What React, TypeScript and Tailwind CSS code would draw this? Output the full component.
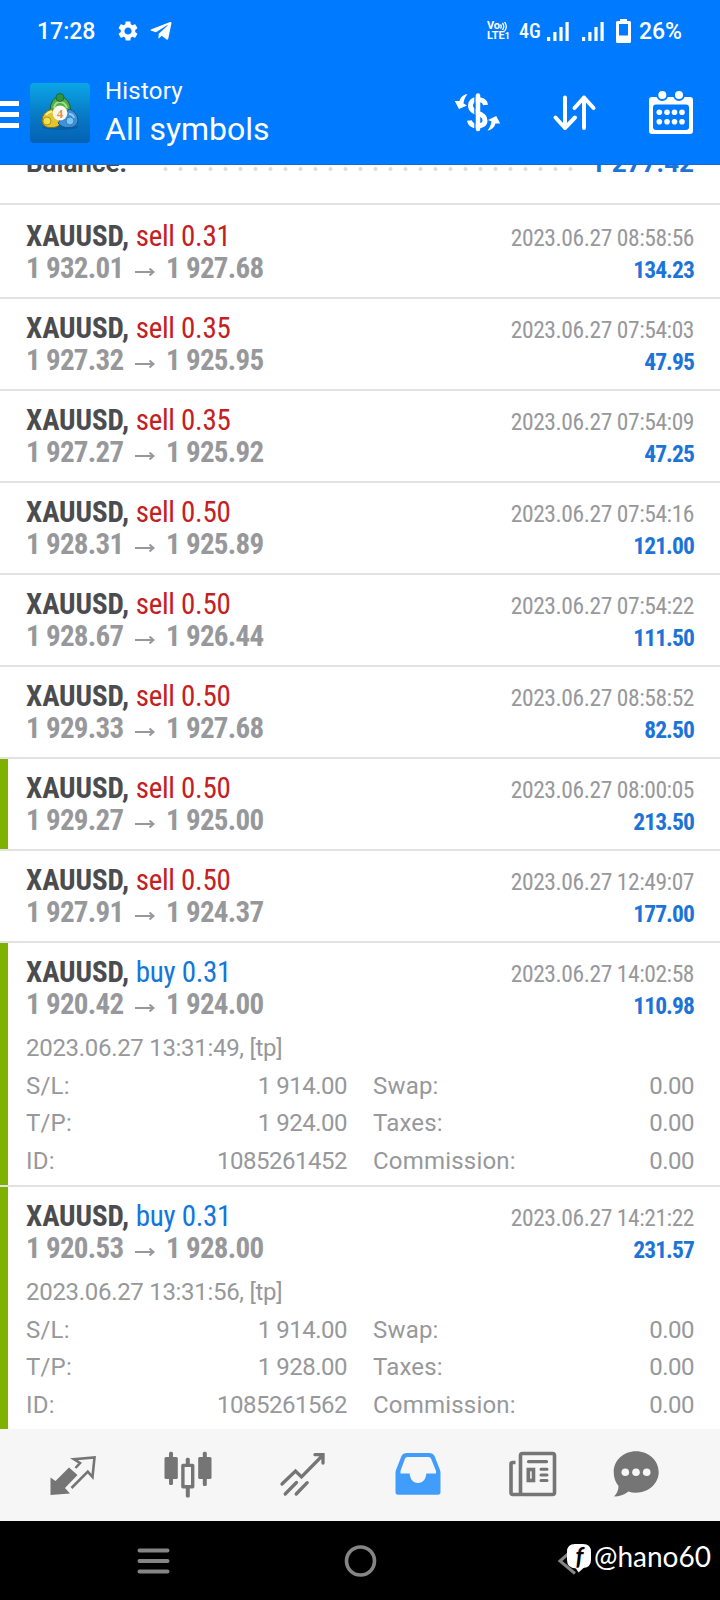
import { MdSettings } from "react-icons/md";
import { FaTelegramPlane } from "react-icons/fa";

interface Details {
  opened: string;
  sl: string;
  tp: string;
  id: string;
}

interface Deal {
  side: "buy" | "sell";
  lots: string;
  open: string;
  close: string;
  time: string;
  profit: string;
  tp?: boolean;
  details?: Details;
}

const deals: Deal[] = [
  { side: "sell", lots: "0.31", open: "1 932.01", close: "1 927.68", time: "2023.06.27 08:58:56", profit: "134.23" },
  { side: "sell", lots: "0.35", open: "1 927.32", close: "1 925.95", time: "2023.06.27 07:54:03", profit: "47.95" },
  { side: "sell", lots: "0.35", open: "1 927.27", close: "1 925.92", time: "2023.06.27 07:54:09", profit: "47.25" },
  { side: "sell", lots: "0.50", open: "1 928.31", close: "1 925.89", time: "2023.06.27 07:54:16", profit: "121.00" },
  { side: "sell", lots: "0.50", open: "1 928.67", close: "1 926.44", time: "2023.06.27 07:54:22", profit: "111.50" },
  { side: "sell", lots: "0.50", open: "1 929.33", close: "1 927.68", time: "2023.06.27 08:58:52", profit: "82.50" },
  { side: "sell", lots: "0.50", open: "1 929.27", close: "1 925.00", time: "2023.06.27 08:00:05", profit: "213.50", tp: true },
  { side: "sell", lots: "0.50", open: "1 927.91", close: "1 924.37", time: "2023.06.27 12:49:07", profit: "177.00" },
  {
    side: "buy", lots: "0.31", open: "1 920.42", close: "1 924.00", time: "2023.06.27 14:02:58", profit: "110.98", tp: true,
    details: { opened: "2023.06.27 13:31:49, [tp]", sl: "1 914.00", tp: "1 924.00", id: "1085261452" },
  },
  {
    side: "buy", lots: "0.31", open: "1 920.53", close: "1 928.00", time: "2023.06.27 14:21:22", profit: "231.57", tp: true,
    details: { opened: "2023.06.27 13:31:56, [tp]", sl: "1 914.00", tp: "1 928.00", id: "1085261562" },
  },
];

function SignalBars() {
  return (
    <svg width="22" height="20" viewBox="0 0 22 20" fill="#fff">
      <rect x="0" y="16" width="3.2" height="4" />
      <rect x="6.3" y="11" width="3.2" height="9" />
      <rect x="12.4" y="6" width="3.2" height="14" />
      <rect x="18.5" y="1" width="3.2" height="19" />
    </svg>
  );
}

function StatusBar() {
  return (
    <div className="flex h-[62px] items-center pr-[38px] pl-[37px] text-white">
      <span className="w-[79px] pt-[2px] text-[23px] leading-[60px] font-medium">17:28</span>
      <MdSettings size={24} />
      <FaTelegramPlane size={24} className="ml-[9px]" />
      <div className="ml-auto flex w-[25px] flex-col font-bold">
        <span className="flex items-center text-[11px] leading-[10px]">
          Vo
          <svg width="7" height="9" viewBox="0 0 7 9" fill="none" stroke="#fff" strokeWidth="1.3">
            <path d="M0.5 2.5Q2 4.5 .5 6.5M2.5 1Q5 4.5 2.5 8M4.6 0Q8 4.5 4.6 9" />
          </svg>
        </span>
        <span className="flex items-baseline text-[11px] leading-[10px]">
          LTE<span className="text-[9px]">1</span>
        </span>
      </div>
      <span className="ml-[7px] w-[28px] text-[20px] leading-[60px] font-medium font-stretch-condensed">4G</span>
      <SignalBars />
      <div className="w-[13px]" />
      <SignalBars />
      <svg className="ml-[12px]" width="15" height="24" viewBox="0 0 15 24">
        <path fill="#fff" fillRule="evenodd" d="M4 0H11V2H13.5Q15 2 15 3.500V22.500Q15 24 13.500 24H1.500Q0 24 0 22.500V3.500Q0 2 1.500 2H4ZM3 5V16.500H12V5Z" />
      </svg>
      <span className="ml-[8px] pt-[2px] text-[23px] leading-[60px] font-medium">26%</span>
    </div>
  );
}

function AppLogo() {
  return (
    <svg width="60" height="60" viewBox="0 0 60 60">
      <defs>
        <linearGradient id="logoBg" x1="0" y1="0" x2="0" y2="1">
          <stop offset="0" stopColor="#0aa6e6" />
          <stop offset="0.55" stopColor="#0879c4" />
          <stop offset="1" stopColor="#0561b4" />
        </linearGradient>
      </defs>
      <rect width="60" height="60" rx="4" fill="url(#logoBg)" />
      <ellipse cx="30" cy="44" rx="18" ry="3" fill="#04508f" opacity="0.5" />
      <path d="M20 29Q20 14 30 14T41 29L30 33Z" fill="#4fae4a" stroke="#17603a" strokeWidth="1" />
      <path d="M24 25Q25 19 30 19T37 25" fill="none" stroke="#a4dd84" strokeWidth="2" />
      <path d="M22 26Q12 29 12 38Q13 45 21 44.500Q28 45 31 40Z" fill="#e2c530" stroke="#7b7318" strokeWidth="1" />
      <path d="M39 26Q48 29 48 38Q46 45 39 44.500Q32 45 28 40Z" fill="#3d93d8" stroke="#155591" strokeWidth="1" />
      <path d="M16 32Q19 28 22 29" fill="none" stroke="#f8ec8c" strokeWidth="2" />
      <path d="M39 31Q43 31 44 35" fill="none" stroke="#90cdf5" strokeWidth="2" />
      <circle cx="30" cy="14.500" r="4" fill="#2f9440" stroke="#17603a" strokeWidth="0.8" />
      <circle cx="17" cy="38" r="4" fill="#f4df4c" stroke="#98861b" strokeWidth="0.8" />
      <circle cx="40" cy="38" r="4" fill="#7cc4f4" stroke="#2670ab" strokeWidth="0.8" />
      <circle cx="30" cy="30" r="7.400" fill="#fdf8f2" />
      <text x="30" y="34.500" textAnchor="middle" fontSize="13" fontWeight="700" fill="#e8924a" fontFamily="Liberation Serif, serif">4</text>
    </svg>
  );
}

function Header() {
  return (
    <header className="h-[165px] shrink-0 border-b border-[#1a6bd0] bg-[#007aff]">
      <StatusBar />
      <div className="flex h-[101px] items-center pr-[26px]">
        <div className="flex w-[30px] flex-col gap-[6px] pt-1">
          <div className="h-[5px] w-[19px] bg-white" />
          <div className="h-[5px] w-[19px] bg-white" />
          <div className="h-[5px] w-[19px] bg-white" />
        </div>
        <AppLogo />
        <div className="ml-[15px] flex flex-col pb-[3px] text-white">
          <span className="text-[24px] leading-[36px] tracking-[0.2px]">History</span>
          <span className="text-[32px] leading-[40px]">All symbols</span>
        </div>
        <svg className="ml-auto" width="48" height="42" viewBox="0 0 48 42" fill="none">
          <path d="M31.500 13C31 9 27 7.500 23.500 7.500C19 7.500 16.500 10 16.500 13.500C16.500 18 20 19.500 23.500 21C28 22.500 31 24.500 31 28.500C31 32.500 27.500 34 23.500 34C19 34 16 32 15.500 28.500" stroke="#fff" strokeWidth="5" />
          <path d="M21 1.500V39" stroke="#007aff" strokeWidth="1.500" />
          <path d="M24 3.500V37" stroke="#fff" strokeWidth="4.500" strokeLinecap="round" />
          <path fill="#fff" d="M13.500 2C9.500 2.500 6.500 5 5.500 9L0.800 9L5 17L13 13.500L9.500 11.500C10 7 11.500 4.500 13.500 2Z" />
          <path fill="#fff" d="M33.500 38.700C37.500 38 40.500 35.500 41.500 31.500L46.200 31.500L42.200 24L34 28L37.500 29.500C37 33 35.500 36 33.500 38.700Z" />
        </svg>
        <svg className="ml-[50px]" width="46" height="42" viewBox="0 0 46 42" fill="none" stroke="#fff" strokeWidth="4" strokeLinecap="round" strokeLinejoin="round">
          <path d="M13 5.500V36M3.500 25.500L13 36L23 25.500" />
          <path d="M32 36V5.500M22.500 16L32 5.500L41.500 16" />
        </svg>
        <svg className="ml-[50px]" width="46" height="48" viewBox="0 0 46 48" fill="#fff">
          <path fillRule="evenodd" d="M4 8H42Q45 8 45 11V42Q45 45 42 45H4Q1 45 1 42V11Q1 8 4 8ZM8 15.500Q5 15.500 5 18.500V38Q5 41 8 41H38Q41 41 41 38V18.500Q41 15.500 38 15.500Z" />
          <circle cx="14.300" cy="6" r="5" stroke="#007aff" strokeWidth="2" />
          <circle cx="31" cy="6" r="5" stroke="#007aff" strokeWidth="2" />
          {[11.3, 19, 26.500, 34].map((x) => (
            <g key={x}>
              <circle cx={x} cy="23.300" r="2.800" />
              <circle cx={x} cy="32.700" r="2.800" />
            </g>
          ))}
        </svg>
      </div>
    </header>
  );
}

function Balance() {
  return (
    <div className="h-[40px] shrink-0 overflow-hidden border-b-2 border-[#e2e2e4] px-[26px]">
      <div className="-mt-[20px] flex h-[40px] items-baseline text-[26px] leading-[36px] font-bold">
        <span className="w-[137px] text-[#4b4c50]">Balance:</span>
        <svg width="412" height="5" viewBox="0 0 412 5" fill="#d9dfe3">
          {Array.from({ length: 28 }, (_, i) => (
            <circle key={i} cx={2.500 + i * 15} cy="2" r="2" />
          ))}
        </svg>
        <span className="ml-auto text-[#1c74d8]">1 277.42</span>
      </div>
    </div>
  );
}

function Row({ label, value }: { label: string; value: string }) {
  return (
    <div className="flex justify-between">
      <span className="tracking-[0.2px]">{label}</span>
      <span className="tracking-[-0.5px]">{value}</span>
    </div>
  );
}

function DealItem({ deal }: { deal: Deal }) {
  const { details } = deal;
  return (
    <div className="flex shrink-0 border-b-2 border-[#e2e2e4] last:border-b-0">
      <div className={deal.tp ? "w-[8px] bg-[#7fb200]" : "w-[8px]"} />
      <div className={details ? "h-[242px] flex-1 pt-[13px] pr-[26px] pl-[18px]" : "h-[90px] flex-1 pt-[13px] pr-[26px] pl-[18px]"}>
        <div className="flex justify-between leading-[32px] font-stretch-condensed">
          <p className="text-[29px]">
            <span className="font-bold tracking-[-0.1px] text-[#4b4c50]">XAUUSD,</span>{" "}
            <span className={deal.side === "buy" ? "tracking-[-0.3px] text-[#1277dc]" : "tracking-[-0.3px] text-[#c4201f]"}>
              {deal.side} {deal.lots}
            </span>
          </p>
          <span className="pt-[2px] text-[23.500px] tracking-[-0.42px] text-[#97989b]">{deal.time}</span>
        </div>
        <div className="-mt-[1px] flex items-baseline justify-between leading-[30px] font-bold font-stretch-condensed">
          <div className="flex items-baseline text-[29px] text-[#97989b]">
            <span className="w-[109px] tracking-[-0.7px]">{deal.open}</span>
            <svg width="20" height="10" viewBox="0 0 20 10" fill="none" stroke="#97989b" strokeWidth="2">
              <path d="M0 4H18.500M14.500 0.500L18.500 4L14.500 7.500" />
            </svg>
            <span className="ml-[11px] tracking-[-0.7px]">{deal.close}</span>
          </div>
          <span className="text-[23.500px] tracking-[-0.9px] text-[#1c74d8]">{deal.profit}</span>
        </div>
        {details && (
          <div className="pt-[9px] text-[24px] leading-[37.500px] text-[#97989b]">
            <p className="tracking-[-0.3px]">{details.opened}</p>
            <div className="grid grid-cols-2 gap-x-[26px]">
              <Row label="S/L:" value={details.sl} />
              <Row label="Swap:" value="0.00" />
              <Row label="T/P:" value={details.tp} />
              <Row label="Taxes:" value="0.00" />
              <Row label="ID:" value={details.id} />
              <Row label="Commission:" value="0.00" />
            </div>
          </div>
        )}
      </div>
    </div>
  );
}

const gray = "#757575";

function TabBar() {
  return (
    <nav className="flex h-[92px] shrink-0 items-center bg-[#f6f6f6] pl-[15px]">
      <div className="flex w-[115px] justify-center">
        <svg width="48" height="48" viewBox="0 0 48 48">
          <path fill={gray} d="M1.500 26.500L6.500 30L20 16.500L28.500 24L16 37L21 42.500L1.500 44Z" />
          <path fill="none" stroke={gray} strokeWidth="2.600" d="M26.500 17L31 12L25 8.300L45.500 6.500L43.500 26L38.800 20.700L22.500 37" />
        </svg>
      </div>
      <div className="flex w-[115px] justify-center">
        <svg width="48" height="48" viewBox="0 0 48 48" fill={gray}>
          <rect x="0.500" y="6" width="13.300" height="22" rx="1.500" />
          <rect x="5" y="0.700" width="4" height="33.300" rx="1.500" />
          <rect x="34.200" y="6" width="13.300" height="22" rx="1.500" />
          <rect x="38.800" y="0.700" width="4" height="34.300" rx="1.500" />
          <rect x="21.800" y="6.700" width="4" height="8" rx="1.500" />
          <rect x="21.800" y="36" width="4" height="10.500" rx="1.500" />
          <rect x="18.900" y="14.400" width="9.800" height="21.300" fill="none" stroke={gray} strokeWidth="3.400" strokeLinejoin="round" />
        </svg>
      </div>
      <div className="flex w-[115px] justify-center">
        <svg width="48" height="48" viewBox="0 0 48 48" fill="none" stroke={gray} strokeWidth="3.300" strokeLinecap="round">
          <path d="M3 33L16.500 20L22.500 26L43.500 4.500M36 3.700H44V12" />
          <path d="M6.200 43L17.500 31.500M17.200 43L28.200 31.700" />
        </svg>
      </div>
      <div className="flex w-[115px] justify-center">
        <svg width="48" height="48" viewBox="0 0 48 48">
          <path fill="#429cfb" fillRule="evenodd" d="M13 2H35Q39 2 40.500 5L46 19Q46.500 20.500 46.500 22V41Q46.500 43.700 44 43.700H4Q1.500 43.700 1.500 41V22Q1.500 20.500 2 19L7.500 5Q9 2 13 2ZM13.500 6Q11.500 6 11 7.500L6.500 20V22.500H15.700C16 28 19 32 24 32S32 28 32.300 22.500H42V20L37 7.500Q36.500 6 34.500 6Z" />
        </svg>
      </div>
      <div className="flex w-[115px] justify-center">
        <svg width="49" height="48" viewBox="0 0 49 48" fill="none" stroke={gray} strokeWidth="3.600">
          <rect x="12.500" y="2.500" width="34" height="41" rx="2" />
          <path d="M13 43.500H5Q3 43.500 3 41.500V13Q3 11.500 5 11.500H7.500" />
          <path strokeLinecap="round" strokeWidth="3.200" d="M20.500 10.700H38.500" />
          <rect x="20.300" y="18.500" width="5.200" height="11" />
          <path strokeLinecap="round" strokeWidth="3" d="M33 18.300H39M33 24H39M33 29.500H39" />
        </svg>
      </div>
      <div className="flex w-[92px] justify-center">
        <svg width="48" height="48" viewBox="0 0 48 48">
          <path fill={gray} d="M24 0.300C36.500 0.300 46.700 9.500 46.700 21S36.500 41.700 24 41.700Q19.500 41.700 16.500 40.500Q10 45.500 2 45.500Q6.500 41 6.500 35Q1.700 29 1.700 21C1.700 9.500 11.500 0.300 24 0.300Z" />
          <circle cx="13.300" cy="21.300" r="3.800" fill="#f6f6f6" />
          <circle cx="24" cy="21.300" r="3.800" fill="#f6f6f6" />
          <circle cx="34.700" cy="21.300" r="3.800" fill="#f6f6f6" />
        </svg>
      </div>
    </nav>
  );
}

function SystemNav() {
  return (
    <div className="relative flex h-[79px] shrink-0 items-center bg-black pl-[137px]">
      <svg width="33" height="26" viewBox="0 0 33 26" stroke="#858585" strokeWidth="4" strokeLinecap="round">
        <path d="M2.500 2.500H30.500M2.500 13H30.500M2.500 23.500H30.500" />
      </svg>
      <svg className="ml-[173px]" width="34" height="34" viewBox="0 0 34 34" fill="none" stroke="#858585" strokeWidth="3.600">
        <circle cx="17.500" cy="17" r="14" />
      </svg>
      <svg className="ml-[180px]" width="20" height="30" viewBox="0 0 20 30" fill="none" stroke="#858585" strokeWidth="3">
        <path d="M18 2L3 15L18 27.500" />
      </svg>
      <div className="absolute top-[20px] left-[566px] flex text-white">
        <svg width="26" height="32" viewBox="0 0 26 32">
          <path fill="#fff" d="M9 3H17Q25 3 25 11V19Q25 26 17.500 27L12.500 31.500L10 27.500Q1 27 1 19V11Q1 3 9 3Z" />
          <text x="13.500" y="24" textAnchor="middle" fontSize="24" fontWeight="700" fontStyle="italic" fontFamily="Lato, sans-serif" fill="#000">f</text>
        </svg>
        <span className="ml-[2px] font-['Lato',sans-serif] text-[28px] leading-[30px]">@hano60</span>
      </div>
    </div>
  );
}

export default function App() {
  return (
    <div className="flex h-[1600px] w-[720px] flex-col overflow-hidden bg-white font-['Roboto',sans-serif]">
      <Header />
      <Balance />
      <main className="flex h-[1224px] shrink-0 flex-col overflow-hidden pt-[2px]">
        {deals.map((deal) => (
          <DealItem key={deal.time} deal={deal} />
        ))}
      </main>
      <TabBar />
      <SystemNav />
    </div>
  );
}
